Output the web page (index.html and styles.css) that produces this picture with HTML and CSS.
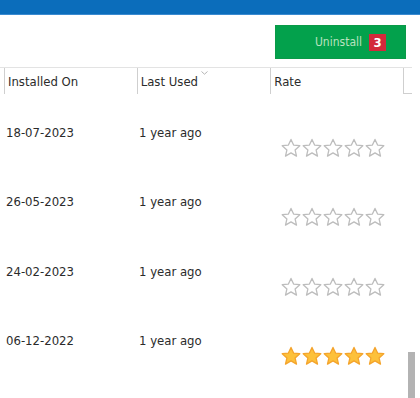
FILE: index.html
```html
<html>
<head><title>Programs</title>
<link rel="stylesheet" href="styles.css">
</head>
<body>
<div class="topbar"></div>
<div class="toolbar">
	<button class="uninstall">Uninstall <span class="badge">3</span></button>
</div>
<div class="grid">
	<div class="head">
		<div class="col">Installed On</div>
		<div class="col sorted">Last Used<svg class="sort" width="7" height="4" viewBox="0 0 7 4"><polyline points="0.5,0.5 3.5,3.2 6.5,0.5"/></svg></div>
		<div class="col">Rate</div>
		<div class="filler"></div>
	</div>
	<div class="row">
		<div class="cell">18-07-2023</div>
		<div class="cell">1 year ago</div>
		<div class="cell rate" data-rate="0"></div>
	</div>
	<div class="row">
		<div class="cell">26-05-2023</div>
		<div class="cell">1 year ago</div>
		<div class="cell rate" data-rate="0"></div>
	</div>
	<div class="row">
		<div class="cell">24-02-2023</div>
		<div class="cell">1 year ago</div>
		<div class="cell rate" data-rate="0"></div>
	</div>
	<div class="row">
		<div class="cell">06-12-2022</div>
		<div class="cell">1 year ago</div>
		<div class="cell rate" data-rate="5"></div>
	</div>
	<div class="thumb"></div>
</div>
<script type="text/javascript">
// draw the rating stars
star = '<polygon points="10,1.4 12.6,7.1 18.8,7.7 14.1,11.9 15.5,18.1 10,14.9 4.5,18.1 5.9,11.9 1.2,7.7 7.4,7.1"/>';
cells = document.querySelectorAll(".rate");
for (i = 0; i < cells.length; i++) {
	rate = parseInt(cells[i].getAttribute("data-rate"));
	html = '<div class="stars">';
	for (s = 0; s < 5; s++) {
		cls = s < rate ? "star on" : "star";
		html += '<svg class="' + cls + '" width="20" height="20" viewBox="0 0 20 20">' + star + '</svg>';
	}
	html += '</div>';
	cells[i].innerHTML = html;
}
</script>
</body>
</html>
```
FILE: styles.css
```css
body {
	margin:0px;
	width:420px;
	height:398px;
	overflow:hidden;
	background:#fff;
	font-family: "DejaVu Sans Condensed", "DejaVu Sans", sans-serif;
	font-size:13px;
	color:#2b2b2b;
}

.topbar {
	height:14px;
	background:#0b6dbb;
	border-bottom:1px solid #3a8ad0;
}

.toolbar {
	display:flex;
	justify-content:flex-end;
	padding:10px 14px 0px 0px;
	height:42px;
	box-sizing:content-box;
}
.uninstall {
	width:131px;
	height:34px;
	background:#03a14c;
	border:1px solid #0a9a48;
	color:#b9e2bf;
	font-family: "DejaVu Sans Condensed", "DejaVu Sans", sans-serif;
	font-size:12px;
	display:flex;
	align-items:center;
	justify-content:flex-end;
	padding:0px 19px 0px 0px;
	margin:0px;
	gap:7px;
}
.badge {
	display:inline-block;
	width:17px;
	height:17px;
	line-height:17px;
	background:#d3293b;
	color:#fff;
	font-weight:bold;
	font-size:13px;
	text-align:center;
}

.grid {
	position:relative;
	height:331px;
}
.head {
	display:flex;
	height:26px;
	border-top:1px solid #e3e3e3;
	width:408px;
	padding-left:4px;
}
.col {
	width:133px;
	border-left:1px solid #cfcfcf;
	padding:6px 0px 0px 3px;
	box-sizing:border-box;
	position:relative;
}
.col.sorted {
	width:134px;
}
.sort {
	position:absolute;
	left:63px;
	top:3px;
	fill:none;
	stroke:#b5b5b5;
	stroke-width:1;
}
.filler {
	width:8px;
	border-left:1px solid #cfcfcf;
	border-bottom:1px solid #cfcfcf;
	height:25px;
}

.row {
	display:flex;
	height:69.3px;
	padding-left:5px;
}
.cell {
	width:133px;
	padding:31px 0px 0px 1px;
	box-sizing:border-box;
}
.cell.rate {
	padding:44px 0px 0px 10px;
}
.stars {
	display:flex;
	gap:1px;
}
.star {
	fill:#fff;
	stroke:#bdbdbd;
	stroke-width:1.3;
	stroke-linejoin:round;
}
.star.on {
	fill:#fdc13a;
	stroke:#f4a42c;
}

.thumb {
	position:absolute;
	right:5px;
	bottom:0px;
	width:7px;
	height:46px;
	background:#b3b3b3;
}
```
